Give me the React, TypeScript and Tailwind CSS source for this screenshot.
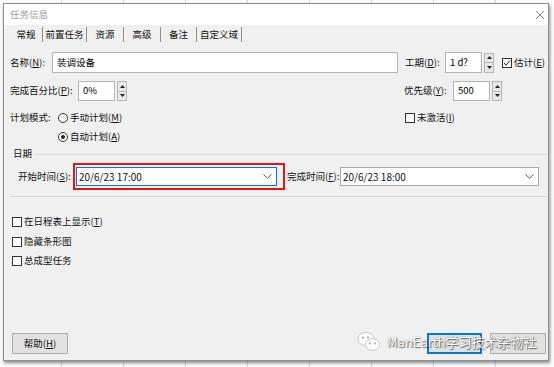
import React from "react";

const F = "font-['Noto_Sans_CJK_SC','Noto_Sans',sans-serif]";

function Spinner() {
  return (
    <div className="flex flex-col w-[10px] h-[20px] ml-[2px]">
      <div className="flex-1 border border-[#b8b8b8] bg-[#e8e8e8] flex items-center justify-center">
        <svg width="5" height="3" viewBox="0 0 5 3"><path d="M0 3 L2.5 0 L5 3 Z" fill="#222" /></svg>
      </div>
      <div className="flex-1 border border-t-0 border-[#b8b8b8] bg-[#e8e8e8] flex items-center justify-center">
        <svg width="5" height="3" viewBox="0 0 5 3"><path d="M0 0 L2.5 3 L5 0 Z" fill="#222" /></svg>
      </div>
    </div>
  );
}

function Check({ checked = false }: { checked?: boolean }) {
  return (
    <div className="w-[10px] h-[10px] border border-[#333] bg-white flex items-center justify-center shrink-0">
      {checked && (
        <svg width="8" height="8" viewBox="0 0 8 8">
          <path d="M1 4 L3 6.2 L7 1.5" stroke="#222" strokeWidth="1" fill="none" />
        </svg>
      )}
    </div>
  );
}

function Radio({ checked = false }: { checked?: boolean }) {
  return (
    <div className="w-[10px] h-[10px] rounded-full border border-[#333] bg-white flex items-center justify-center shrink-0">
      {checked && <div className="w-[4px] h-[4px] rounded-full bg-[#222]" />}
    </div>
  );
}

function Chevron() {
  return (
    <svg width="9" height="5" viewBox="0 0 9 5">
      <path d="M0.5 0.5 L4.5 4.2 L8.5 0.5" stroke="#555" strokeWidth="1" fill="none" />
    </svg>
  );
}

function Field({ w, h = 20, value }: { w: number; h?: number; value: string }) {
  return (
    <div
      className="bg-white border border-[#b4b4b4] flex items-center pl-[4px] text-black shrink-0"
      style={{ width: w, height: h }}
    >
      {value}
    </div>
  );
}

export default function App() {
  const tabs = [
    { t: "常规", w: 33 },
    { t: "前置任务", w: 44 },
    { t: "资源", w: 37 },
    { t: "高级", w: 37 },
    { t: "备注", w: 36 },
    { t: "自定义域", w: 45 },
  ];
  return (
    <div
      className={`relative w-[554px] h-[367px] overflow-hidden bg-[#fbfbfb] bg-[repeating-linear-gradient(90deg,transparent_0_61px,#d6d6d6_61px_62px)] ${F} text-[9.5px] text-[#111] leading-none`}
    >
      <div className="ml-[3px] mt-[3px] w-[546px] h-[358px] border border-[#8f8f8f] shadow-[1px_2px_3px_rgba(0,0,0,0.45)] bg-[#f0f0f0] flex flex-col">
        {/* title bar */}
        <div className="h-[21px] bg-white flex items-center justify-between pl-[6px] pr-[4px]">
          <span className="text-[#9a9a9a] text-[9.5px]">任务信息</span>
          <svg width="10" height="10" viewBox="0 0 10 10" className="mr-[-1px]">
            <path d="M1 1 L9 9 M9 1 L1 9" stroke="#8a8a8a" strokeWidth="1" />
          </svg>
        </div>
        {/* tabs */}
        <div className="h-[19px] flex pl-[6px]">
          {tabs.map((tab, i) => (
            <div
              key={tab.t}
              className={`flex items-center justify-center border-r border-[#8c8c8c] my-[2px] ${i === 0 ? "bg-[#f0f0f0] text-black" : ""}`}
              style={{ width: tab.w }}
            >
              {tab.t}
            </div>
          ))}
        </div>
        {/* body */}
        <div className="flex-1 flex flex-col pl-[6px] pr-[2px]">
          {/* name row */}
          <div className="mt-[8px] h-[21px] flex items-center">
            <span className="w-[42px]">名称(<u>N</u>):</span>
            <Field w={346} h={21} value="装调设备" />
            <span className="ml-[7px] w-[40px]">工期(<u>D</u>):</span>
            <Field w={37} h={21} value="1 d?" />
            <Spinner />
            <div className="ml-[8px]"><Check checked /></div>
            <span className="ml-[2px]">估计(<u>E</u>)</span>
          </div>
          {/* row 2 */}
          <div className="mt-[8px] h-[20px] flex items-center">
            <div className="w-[394px] flex items-center">
              <span className="w-[68px]">完成百分比(<u>P</u>):</span>
              <Field w={37} value="0%" />
              <Spinner />
            </div>
            <span className="w-[49px]">优先级(<u>Y</u>):</span>
            <Field w={37} value="500" />
            <Spinner />
          </div>
          {/* row 3 */}
          <div className="mt-[9px] h-[16px] flex items-center">
            <div className="w-[395px] flex items-center">
              <span className="w-[48px]">计划模式:</span>
              <Radio />
              <span className="ml-[2px]">手动计划(<u>M</u>)</span>
            </div>
            <Check />
            <span className="ml-[2px]">未激活(<u>I</u>)</span>
          </div>
          {/* row 4 */}
          <div className="mt-[3px] h-[16px] flex items-center pl-[48px]">
            <Radio checked />
            <span className="ml-[2px]">自动计划(<u>A</u>)</span>
          </div>
          {/* 日期 */}
          <div className="mt-[2px] h-[14px] flex items-center pl-[3px] -mr-[2px]">
            <span>日期</span>
            <div className="flex-1 h-px bg-[#d9d9d9] ml-[3px]" />
          </div>
          {/* dates */}
          <div className="mt-[2px] h-[27px] flex items-center pl-[8px]">
            <span className="w-[55px]">开始时间(<u>S</u>):</span>
            <div className="w-[212px] h-[27px] border-2 border-[#ee1111] pl-[1px] pt-[2px]">
              <div className="w-[201px] h-[19px] bg-white border border-[#0078d7] flex items-center justify-between pl-[2px] pr-[4px]">
                <span className="text-[10px]">20/6/23 17:00</span>
                <Chevron />
              </div>
            </div>
            <span className="ml-[2px] w-[53px]">完成时间(<u>F</u>):</span>
            <div className="w-[199px] h-[19px] bg-white border border-[#a8a8a8] flex items-center justify-between pl-[2px] pr-[4px]">
              <span className="text-[10px]">20/6/23 18:00</span>
              <Chevron />
            </div>
          </div>
          <div className="mt-[6px] h-px bg-[#d9d9d9] -mr-[2px]" />
          {/* checkboxes */}
          <div className="mt-[17px] h-[16px] flex items-center pl-[2px]">
            <Check />
            <span className="ml-[2px]">在日程表上显示(<u>T</u>)</span>
          </div>
          <div className="mt-[4px] h-[16px] flex items-center pl-[2px]">
            <Check />
            <span className="ml-[2px]">隐藏条形图</span>
          </div>
          <div className="mt-[3px] h-[16px] flex items-center pl-[2px]">
            <Check />
            <span className="ml-[2px]">总成型任务</span>
          </div>
          {/* buttons */}
          <div className="mt-auto mb-[6px] h-[21px] flex items-stretch pl-[2px]">
            <div className="w-[56px] bg-[#e1e1e1] border border-[#adadad] flex items-center justify-center">
              帮助(<u>H</u>)
            </div>
            <div className="ml-auto w-[55px] bg-[#e1e1e1] border-2 border-[#0078d7]" />
            <div className="ml-[8px] w-[56px] bg-[#e1e1e1] border border-[#adadad]" />
          </div>
        </div>
      </div>
      {/* watermark overlay */}
      <div className="absolute left-[357px] top-[331px] flex items-center">
        <svg width="24" height="21" viewBox="0 0 24 21">
          <ellipse cx="9" cy="8" rx="8" ry="6.5" fill="#fff" stroke="#bbb" strokeWidth="0.8" />
          <ellipse cx="15.5" cy="13.5" rx="7" ry="5.8" fill="#fff" stroke="#bbb" strokeWidth="0.8" />
          <circle cx="6" cy="6.5" r="1" fill="#999" />
          <circle cx="11" cy="6.5" r="1" fill="#999" />
          <circle cx="13" cy="12.5" r="0.9" fill="#999" />
          <circle cx="18" cy="12.5" r="0.9" fill="#999" />
        </svg>
        <span className="ml-[6px] text-[13px] text-white font-['Noto_Sans_CJK_SC','Noto_Sans',sans-serif] [text-shadow:1px_1px_1px_rgba(0,0,0,0.55),0_0_1px_rgba(0,0,0,0.5)]">
          ManEarth学习技术杂物社
        </span>
      </div>
    </div>
  );
}
